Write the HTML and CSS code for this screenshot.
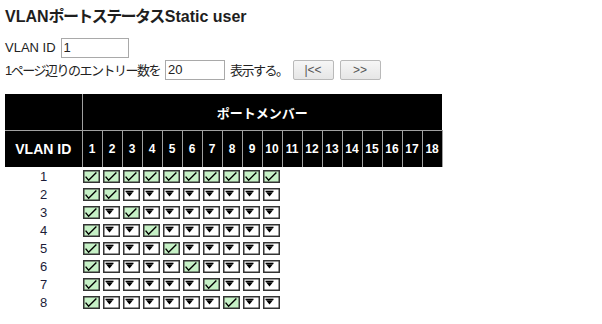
FILE: index.html
```html
<!DOCTYPE html>
<html lang="ja">
<head>
<meta charset="utf-8">
<title>VLAN</title>
<link rel="stylesheet" href="styles.css">
</head>
<body>
<svg class="defs" width="0" height="0" aria-hidden="true">
  <defs>
    <symbol id="on" viewBox="0 0 17 13">
      <rect x="0.75" y="0.75" width="15.5" height="11.5" fill="#c6f1c6" stroke="#333" stroke-width="1.5"/>
      <path d="M2.6 6.6 L5.6 10.2 L13.4 2.4" fill="none" stroke="#000" stroke-width="1.4"/>
    </symbol>
    <symbol id="off" viewBox="0 0 17 13">
      <rect x="0.75" y="0.75" width="15.5" height="11.5" fill="#fff" stroke="#333" stroke-width="1.5"/>
      <rect x="2.5" y="2.7" width="8" height="1.4" fill="#000"/>
      <path d="M3 4.3 L10 4.3 L6.5 8.6 Z" fill="#000"/>
    </symbol>
  </defs>
</svg>

<h1 class="title">VLAN<span class="jp16">ポートステータス</span>Static user</h1>

<div class="form">
  <div class="row">
    <span>VLAN ID</span>
    <input class="inp inp-id" type="text" value="1">
  </div>
  <div class="row">
    <span class="jp13">1ページ辺りのエントリー数を</span>
    <input class="inp inp-n" type="text" value="20">
    <span class="jp13">表示する。</span>
    <button class="btn btn-first">|&lt;&lt;</button>
    <button class="btn">&gt;&gt;</button>
  </div>
</div>

<table class="vlan">
  <colgroup>
    <col class="c-id">
    <col class="c-p"><col class="c-p"><col class="c-p"><col class="c-p"><col class="c-p"><col class="c-p"><col class="c-p"><col class="c-p"><col class="c-p"><col class="c-p"><col class="c-p"><col class="c-p"><col class="c-p"><col class="c-p"><col class="c-p"><col class="c-p"><col class="c-p"><col class="c-p">
  </colgroup>
  <thead>
    <tr class="hr1"><th class="corner"></th><th colspan="18" class="members">ポートメンバー</th></tr>
    <tr class="hr2">
      <th class="idh">VLAN ID</th>
      <th class="pn">1</th><th class="pn">2</th><th class="pn">3</th><th class="pn">4</th><th class="pn">5</th><th class="pn">6</th><th class="pn">7</th><th class="pn">8</th><th class="pn">9</th><th class="pn">10</th><th class="pn">11</th><th class="pn">12</th><th class="pn">13</th><th class="pn">14</th><th class="pn">15</th><th class="pn">16</th><th class="pn">17</th><th class="pn last">18</th>
    </tr>
  </thead>
  <tbody>
    <tr><td class="vid">1</td>
      <td class="p"><svg class="cb"><use href="#on"/></svg></td><td class="p"><svg class="cb"><use href="#on"/></svg></td><td class="p"><svg class="cb"><use href="#on"/></svg></td><td class="p"><svg class="cb"><use href="#on"/></svg></td><td class="p"><svg class="cb"><use href="#on"/></svg></td><td class="p"><svg class="cb"><use href="#on"/></svg></td><td class="p"><svg class="cb"><use href="#on"/></svg></td><td class="p"><svg class="cb"><use href="#on"/></svg></td><td class="p"><svg class="cb"><use href="#on"/></svg></td><td class="p"><svg class="cb"><use href="#on"/></svg></td>
      <td class="p"></td><td class="p"></td><td class="p"></td><td class="p"></td><td class="p"></td><td class="p"></td><td class="p"></td><td class="p"></td></tr>
    <tr><td class="vid">2</td>
      <td class="p"><svg class="cb"><use href="#on"/></svg></td><td class="p"><svg class="cb"><use href="#on"/></svg></td><td class="p"><svg class="cb"><use href="#off"/></svg></td><td class="p"><svg class="cb"><use href="#off"/></svg></td><td class="p"><svg class="cb"><use href="#off"/></svg></td><td class="p"><svg class="cb"><use href="#off"/></svg></td><td class="p"><svg class="cb"><use href="#off"/></svg></td><td class="p"><svg class="cb"><use href="#off"/></svg></td><td class="p"><svg class="cb"><use href="#off"/></svg></td><td class="p"><svg class="cb"><use href="#off"/></svg></td>
      <td class="p"></td><td class="p"></td><td class="p"></td><td class="p"></td><td class="p"></td><td class="p"></td><td class="p"></td><td class="p"></td></tr>
    <tr><td class="vid">3</td>
      <td class="p"><svg class="cb"><use href="#on"/></svg></td><td class="p"><svg class="cb"><use href="#off"/></svg></td><td class="p"><svg class="cb"><use href="#on"/></svg></td><td class="p"><svg class="cb"><use href="#off"/></svg></td><td class="p"><svg class="cb"><use href="#off"/></svg></td><td class="p"><svg class="cb"><use href="#off"/></svg></td><td class="p"><svg class="cb"><use href="#off"/></svg></td><td class="p"><svg class="cb"><use href="#off"/></svg></td><td class="p"><svg class="cb"><use href="#off"/></svg></td><td class="p"><svg class="cb"><use href="#off"/></svg></td>
      <td class="p"></td><td class="p"></td><td class="p"></td><td class="p"></td><td class="p"></td><td class="p"></td><td class="p"></td><td class="p"></td></tr>
    <tr><td class="vid">4</td>
      <td class="p"><svg class="cb"><use href="#on"/></svg></td><td class="p"><svg class="cb"><use href="#off"/></svg></td><td class="p"><svg class="cb"><use href="#off"/></svg></td><td class="p"><svg class="cb"><use href="#on"/></svg></td><td class="p"><svg class="cb"><use href="#off"/></svg></td><td class="p"><svg class="cb"><use href="#off"/></svg></td><td class="p"><svg class="cb"><use href="#off"/></svg></td><td class="p"><svg class="cb"><use href="#off"/></svg></td><td class="p"><svg class="cb"><use href="#off"/></svg></td><td class="p"><svg class="cb"><use href="#off"/></svg></td>
      <td class="p"></td><td class="p"></td><td class="p"></td><td class="p"></td><td class="p"></td><td class="p"></td><td class="p"></td><td class="p"></td></tr>
    <tr><td class="vid">5</td>
      <td class="p"><svg class="cb"><use href="#on"/></svg></td><td class="p"><svg class="cb"><use href="#off"/></svg></td><td class="p"><svg class="cb"><use href="#off"/></svg></td><td class="p"><svg class="cb"><use href="#off"/></svg></td><td class="p"><svg class="cb"><use href="#on"/></svg></td><td class="p"><svg class="cb"><use href="#off"/></svg></td><td class="p"><svg class="cb"><use href="#off"/></svg></td><td class="p"><svg class="cb"><use href="#off"/></svg></td><td class="p"><svg class="cb"><use href="#off"/></svg></td><td class="p"><svg class="cb"><use href="#off"/></svg></td>
      <td class="p"></td><td class="p"></td><td class="p"></td><td class="p"></td><td class="p"></td><td class="p"></td><td class="p"></td><td class="p"></td></tr>
    <tr><td class="vid">6</td>
      <td class="p"><svg class="cb"><use href="#on"/></svg></td><td class="p"><svg class="cb"><use href="#off"/></svg></td><td class="p"><svg class="cb"><use href="#off"/></svg></td><td class="p"><svg class="cb"><use href="#off"/></svg></td><td class="p"><svg class="cb"><use href="#off"/></svg></td><td class="p"><svg class="cb"><use href="#on"/></svg></td><td class="p"><svg class="cb"><use href="#off"/></svg></td><td class="p"><svg class="cb"><use href="#off"/></svg></td><td class="p"><svg class="cb"><use href="#off"/></svg></td><td class="p"><svg class="cb"><use href="#off"/></svg></td>
      <td class="p"></td><td class="p"></td><td class="p"></td><td class="p"></td><td class="p"></td><td class="p"></td><td class="p"></td><td class="p"></td></tr>
    <tr><td class="vid">7</td>
      <td class="p"><svg class="cb"><use href="#on"/></svg></td><td class="p"><svg class="cb"><use href="#off"/></svg></td><td class="p"><svg class="cb"><use href="#off"/></svg></td><td class="p"><svg class="cb"><use href="#off"/></svg></td><td class="p"><svg class="cb"><use href="#off"/></svg></td><td class="p"><svg class="cb"><use href="#off"/></svg></td><td class="p"><svg class="cb"><use href="#on"/></svg></td><td class="p"><svg class="cb"><use href="#off"/></svg></td><td class="p"><svg class="cb"><use href="#off"/></svg></td><td class="p"><svg class="cb"><use href="#off"/></svg></td>
      <td class="p"></td><td class="p"></td><td class="p"></td><td class="p"></td><td class="p"></td><td class="p"></td><td class="p"></td><td class="p"></td></tr>
    <tr><td class="vid">8</td>
      <td class="p"><svg class="cb"><use href="#on"/></svg></td><td class="p"><svg class="cb"><use href="#off"/></svg></td><td class="p"><svg class="cb"><use href="#off"/></svg></td><td class="p"><svg class="cb"><use href="#off"/></svg></td><td class="p"><svg class="cb"><use href="#off"/></svg></td><td class="p"><svg class="cb"><use href="#off"/></svg></td><td class="p"><svg class="cb"><use href="#off"/></svg></td><td class="p"><svg class="cb"><use href="#on"/></svg></td><td class="p"><svg class="cb"><use href="#off"/></svg></td><td class="p"><svg class="cb"><use href="#off"/></svg></td>
      <td class="p"></td><td class="p"></td><td class="p"></td><td class="p"></td><td class="p"></td><td class="p"></td><td class="p"></td><td class="p"></td></tr>
  </tbody>
</table>
</body>
</html>
```
FILE: styles.css
```css
html, body {
  margin: 0;
  padding: 0;
  background: #fff;
}
body {
  padding: 0 5px;
  font-family: "Liberation Sans", "Noto Sans CJK JP", sans-serif;
  font-size: 13px;
  color: #222;
}
.defs {
  position: absolute;
  width: 0;
  height: 0;
}
.title {
  margin: 0;
  padding-top: 7px;
  font-size: 16px;
  line-height: 19px;
  font-weight: bold;
  color: #1e1e1e;
}
.jp16 {
  letter-spacing: -1.6px;
  margin-right: 1px;
}
.jp13 {
  letter-spacing: -1.5px;
}
.form {
  margin-top: 11px;
  display: flex;
  flex-direction: column;
  gap: 1px;
}
.row {
  display: flex;
  align-items: center;
  gap: 5px;
  height: 21px;
}
.inp {
  box-sizing: border-box;
  height: 20px;
  margin: 0;
  padding: 0 2px;
  border: 1px solid #a9a9a9;
  font-family: "Liberation Sans", sans-serif;
  font-size: 13px;
  color: #222;
  background: #fff;
}
.inp-id { width: 68px; }
.inp-n { width: 60px; }
.btn {
  box-sizing: border-box;
  height: 20px;
  width: 41px;
  margin: 0 0 0 1px;
  padding: 0;
  border: 1px solid #b9b9b9;
  border-radius: 2px;
  background: linear-gradient(#f6f6f6, #e6e6e6);
  font-family: "Liberation Sans", sans-serif;
  font-size: 12px;
  color: #555;
}
.btn-first { margin-left: 0; }
.vlan {
  margin-top: 14px;
  border-collapse: collapse;
  table-layout: fixed;
  width: 437px;
}
.c-id { width: 77px; }
.c-p { width: 20px; }
.vlan th {
  background: #000;
  color: #fff;
  padding: 0;
  font-weight: bold;
  text-align: center;
}
.hr1 th {
  height: 36px;
  border-bottom: 1px solid #a0a0a0;
}
.corner { border-right: 1px solid #a0a0a0; }
.members {
  font-size: 13px;
}
.hr2 th {
  height: 36px;
}
.idh {
  font-size: 14px;
  border-right: 1px solid #a0a0a0;
}
.pn {
  font-size: 12px;
  border-right: 1px solid #a0a0a0;
}
.pn.last { border-right: 1px solid #a0a0a0; }
.vlan td {
  padding: 0;
  height: 18px;
}
.vid {
  text-align: center;
  font-size: 13px;
  color: #1c1c38;
}
.p {
  vertical-align: middle;
}
.cb {
  display: block;
  width: 17px;
  height: 13px;
  margin-left: 1px;
}
```
